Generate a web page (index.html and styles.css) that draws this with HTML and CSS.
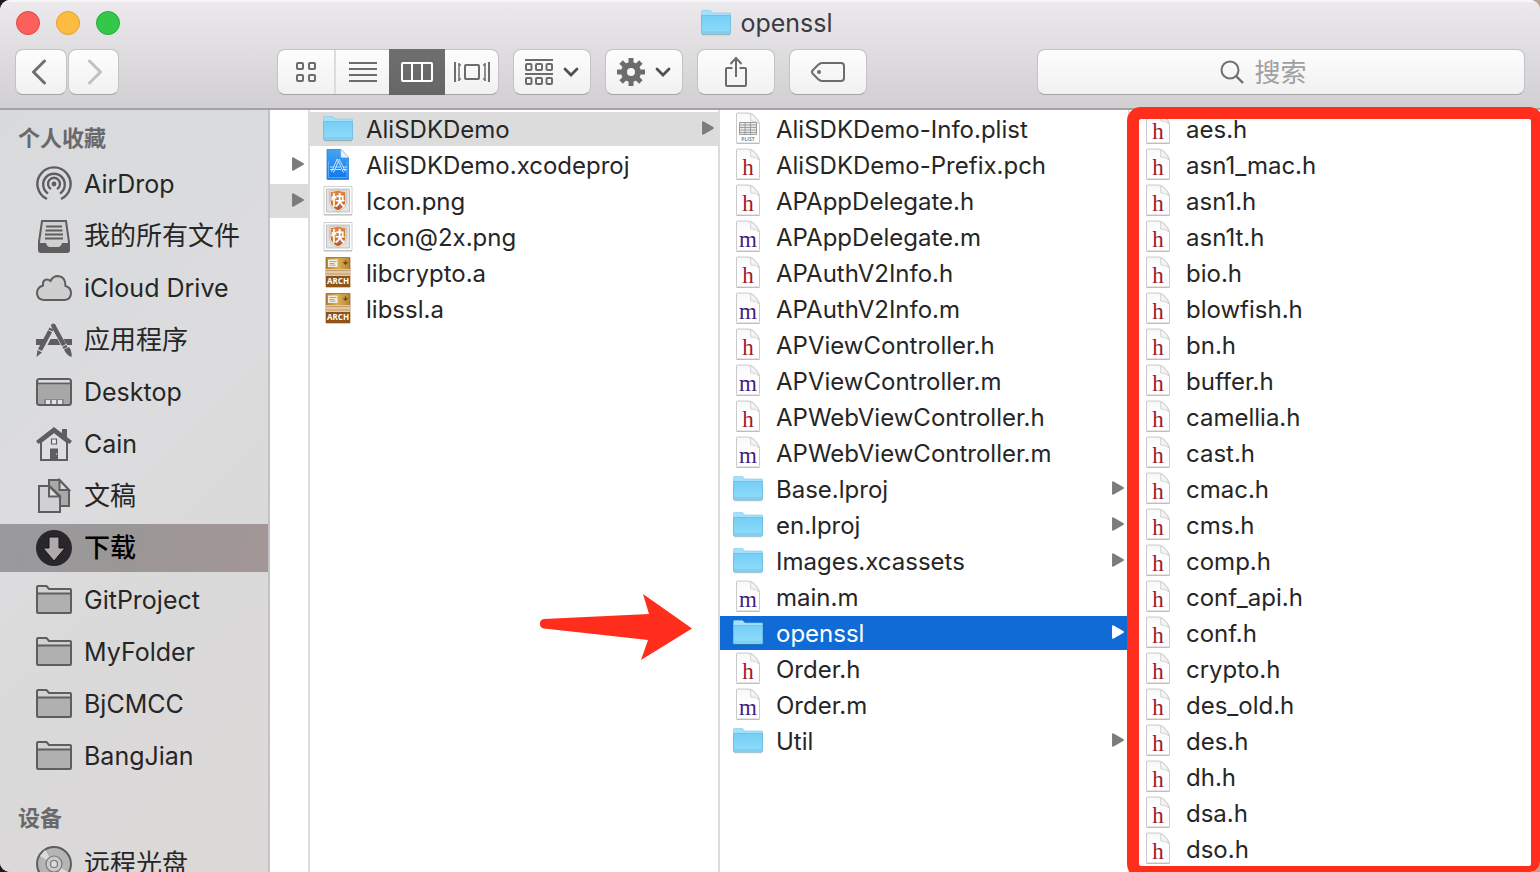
FILE: index.html
```html
<!DOCTYPE html>
<html lang="zh-CN">
<head>
<meta charset="utf-8">
<meta name="viewport" content="width=device-width, initial-scale=1">
<title>openssl</title>
<link rel="stylesheet" href="styles.css">
</head>
<body>
<svg class="defs" width="0" height="0" aria-hidden="true">
  <defs>
    <linearGradient id="folder-fill" x1="0" y1="0" x2="0" y2="1"><stop offset="0" stop-color="#76cff5"/><stop offset="1" stop-color="#8fdcfa"/></linearGradient>
    <linearGradient id="xcode-fill" x1="0" y1="0" x2="0" y2="1"><stop offset="0" stop-color="#45a5f2"/><stop offset="1" stop-color="#0f77ea"/></linearGradient>
    <linearGradient id="page-fill" x1="0" y1="0" x2="0" y2="1"><stop offset="0" stop-color="#f7f7f7"/><stop offset=".4" stop-color="#ffffff"/></linearGradient>
    <linearGradient id="shield-fill" x1="0" y1="0" x2="0" y2="1"><stop offset="0" stop-color="#e08a4c"/><stop offset="1" stop-color="#b9581f"/></linearGradient>
    <linearGradient id="box-fill" x1="0" y1="0" x2="1" y2="0"><stop offset="0" stop-color="#b68334"/><stop offset=".5" stop-color="#d9ae57"/><stop offset="1" stop-color="#b68334"/></linearGradient>
  </defs>
  <symbol id="folder" viewBox="0 0 30 34">
    <path d="M1 28.5h28" stroke="#000" stroke-opacity=".2" stroke-width="1.5"/>
    <path d="M.5 27V5.5q0-1 1-1h8l2.500 2.500H29q.5 0 .5.8V27z" fill="#a3e0fb" stroke="#82c8e6" stroke-width=".6"/>
    <path d="M.5 9.500h29v17.500q0 1-1 1h-27q-1 0-1-1z" fill="url(#folder-fill)" stroke="#66b9dc" stroke-width=".7"/>
    <path d="M1 26h28" stroke="#5fb7df" stroke-width=".6"/>
  </symbol>
  <symbol id="page" viewBox="0 0 30 34">
    <path d="M3.500 31.400h23" stroke="#aaa" stroke-width="1"/>
    <path d="M3.500 2q0-1 1-1H16q4 .5 7 4.500 3.500 4 3.500 7V30q0 1-1 1h-21q-1 0-1-1z" fill="url(#page-fill)" stroke="#cacaca"/>
    <path d="M17 1.500q1 4 .7 7.500 5-.5 8.500 3Q25 8 22 5q-3-3-5-3.500z" fill="#f4f4f4" stroke="#cfcfcf" stroke-width=".9"/>
  </symbol>
  <symbol id="table" viewBox="0 0 30 34">
    <path d="M6 10h18v12.500H6z" fill="#e9e9e9"/>
    <path d="M6.500 10.500h17v12h-17zM6 13h18M6 15.500h18M6 18h18M6 20.500h18M12 10v13M17.500 10v13" fill="none" stroke="#969696" stroke-width=".9"/>
  </symbol>
  <symbol id="file-xcode" viewBox="0 0 30 34">
    <path d="M4 31.400h22" stroke="#888" stroke-width="1"/>
    <path d="M4 1.500h14l7.500 8V31H4z" fill="url(#xcode-fill)" stroke="#2b83d8" stroke-width=".8"/>
    <path d="M18 1.500v7q0 1 1 1h6.500z" fill="#e9f2fb" stroke="#b9cfe4" stroke-width=".6"/>
    <path d="M5.500 13v16.500h18.500V13" fill="none" stroke="#8cc6fa" stroke-width=".6"/>
    <path d="M8.500 24l5.700-13M10.500 24.500l5-11.500M16 11l6.500 12.500M14.200 11l6.300 13.500M7 21.500h4M12 21.500h6M20 21.500h4M7 19h4M13 19h4M20 19h4" fill="none" stroke="#d9eeff" stroke-width=".9"/>
  </symbol>
  <symbol id="file-png" viewBox="0 0 30 34">
    <path d="M1 30.500h28" stroke="#777" stroke-width="1.500"/>
    <path d="M1 2.500h28v28H1z" fill="#fff" stroke="#c4c4c4" stroke-width=".8"/>
    <path d="M3.500 5h23v23h-23z" fill="#e3e3e3" stroke="#b5b5b5" stroke-width=".8"/>
    <path d="M15 5.500q3.500 2 8 2V17q0 6.500-8 10-8-3.500-8-10V7.500q4.500 0 8-2z" fill="url(#shield-fill)" stroke="#f7f7f7" stroke-width="1.200"/>
    <path d="M14.900 5q3.500 2 8.700 2V17q0 7-8.600 10.700Q6.400 24 6.400 17V7q5 0 8.500-2z" fill="none" stroke="#a39a94" stroke-width=".5"/>
  </symbol>
  <symbol id="file-arch" viewBox="0 0 30 34">
    <path d="M3 1.500h24v29.500H3z" fill="url(#box-fill)" stroke="#8b5c22" stroke-width=".7"/>
    <path d="M3 13h24v7H3z" fill="#e1c9a5"/>
    <path d="M3 14.500h24M3 18h24" stroke="#b69060" stroke-width=".8"/>
    <path d="M3 20h24v11H3z" fill="#8f5318"/>
    <path d="M5 3.500h9.500V11H5z" fill="#f5efe2"/>
    <path d="M6.500 5.500h7M6.500 7.500h5M6.500 9.200h6" stroke="#9b9184" stroke-width=".8"/>
    <path d="M22.500 4v4.500m-2-2h4l-2 2.200z" stroke="#6d4618" stroke-width=".8" fill="#6d4618"/>
  </symbol>
  <symbol id="arrow" viewBox="0 0 12 14"><path d="M.8 1v12L11.200 7z" fill="currentColor" stroke="currentColor" stroke-width="1.500" stroke-linejoin="round"/></symbol>
  <symbol id="side-folder" viewBox="0 0 36 36">
    <path d="M1 30V5q0-1 1-1h8.500l2.500 3H34q1 0 1 1v22q0 1-1 1H2q-1 0-1-1z" fill="#d2d2d3"/>
    <path d="M1 11h34v20H1z" fill="#b0b0b1"/>
    <path d="M1 30V5q0-1 1-1h8.500l2.500 3H34q1 0 1 1v22q0 1-1 1H2q-1 0-1-1zM1 11.500h34" fill="none" stroke="#5e5e60" stroke-width="2"/>
  </symbol>
</svg>

<div class="window">
  <header class="titlebar">
    <div class="title-row">
      <div class="lights">
        <button class="light light-close" aria-label="关闭"></button>
        <button class="light light-min" aria-label="最小化"></button>
        <button class="light light-zoom" aria-label="缩放"></button>
      </div>
      <h1 class="title"><svg class="icon"><use href="#folder"/></svg>openssl</h1>
    </div>
    <div class="toolbar">
      <div class="nav">
        <button class="tool nav-btn" aria-label="后退"><svg width="16" height="26" viewBox="0 0 16 26"><path d="M13.500 2L2.500 13l11 11" fill="none" stroke="#6f6f6f" stroke-width="3" stroke-linecap="round" stroke-linejoin="round"/></svg></button>
        <button class="tool nav-btn" aria-label="前进"><svg width="16" height="26" viewBox="0 0 16 26"><path d="M2.500 2l11 11-11 11" fill="none" stroke="#c0c0c0" stroke-width="3" stroke-linecap="round" stroke-linejoin="round"/></svg></button>
      </div>
      <div class="views">
        <button class="view" aria-label="图标"><svg width="20" height="20" viewBox="0 0 20 20" fill="none" stroke="#6c6c6c" stroke-width="2"><rect x="1" y="1" width="6" height="6" rx="1"/><rect x="13" y="1" width="6" height="6" rx="1"/><rect x="1" y="13" width="6" height="6" rx="1"/><rect x="13" y="13" width="6" height="6" rx="1"/></svg></button>
        <button class="view" aria-label="列表"><svg width="28" height="20" viewBox="0 0 28 20" stroke="#6c6c6c" stroke-width="2"><path d="M0 1h28M0 7h28M0 13h28M0 19h28"/></svg></button>
        <button class="view view-on" aria-label="分栏" aria-pressed="true"><svg width="32" height="20" viewBox="0 0 32 20" fill="none" stroke="#fff" stroke-width="2"><rect x="1" y="1" width="30" height="18" rx="1"/><path d="M11 1v18M21 1v18"/></svg></button>
        <button class="view" aria-label="Cover Flow"><svg width="36" height="20" viewBox="0 0 36 20" fill="none" stroke="#6c6c6c" stroke-width="2"><path d="M1 0v20M35 0v20"/><path d="M5 1v18M4 1.500l3 2M4 18.500l3-2M31 1v18M32 1.500l-3 2M32 18.500l-3-2" stroke-width="1.500"/><rect x="11" y="3" width="14" height="14" rx="1"/></svg></button>
      </div>
      <button class="tool" aria-label="排列"><svg width="28" height="28" viewBox="0 0 28 28" fill="none" stroke="#6c6c6c" stroke-width="2"><path d="M0 2h28M0 16h28"/><rect x="1" y="6" width="5.500" height="6" rx="1"/><rect x="11" y="6" width="6" height="6" rx="1"/><rect x="21.500" y="6" width="5.500" height="6" rx="1"/><rect x="1" y="20" width="5.500" height="6" rx="1"/><rect x="11" y="20" width="6" height="6" rx="1"/><rect x="21.500" y="20" width="5.500" height="6" rx="1"/></svg><svg width="16" height="10" viewBox="0 0 16 10"><path d="M2 2l6 6 6-6" fill="none" stroke="#505050" stroke-width="2.800" stroke-linecap="round"/></svg></button>
      <button class="tool" aria-label="操作"><svg width="28" height="28" viewBox="0 0 28 28"><circle cx="14" cy="14" r="7" fill="none" stroke="#6c6c6c" stroke-width="6"/><g stroke="#6c6c6c" stroke-width="5"><path d="M14 0v6M14 22v6M0 14h6M22 14h6M4.100 4.100l4.200 4.200M19.700 19.700l4.200 4.200M23.900 4.100l-4.200 4.200M8.300 19.700l-4.200 4.200"/></g></svg><svg width="16" height="10" viewBox="0 0 16 10"><path d="M2 2l6 6 6-6" fill="none" stroke="#505050" stroke-width="2.800" stroke-linecap="round"/></svg></button>
      <button class="tool" aria-label="共享"><svg width="24" height="32" viewBox="0 0 24 32" fill="none" stroke="#6c6c6c" stroke-width="2"><path d="M8.500 12H3q-1 0-1 1v16q0 1 1 1h18q1 0 1-1V13q0-1-1-1h-5.500M12 21V2M6.500 8L12 2l5.500 6"/></svg></button>
      <button class="tool" aria-label="标记"><svg width="36" height="22" viewBox="0 0 36 22" fill="none" stroke="#6c6c6c" stroke-width="2"><path d="M12 2h19q3 0 3 3v12q0 3-3 3H12q-2 0-4-2l-5-5q-2-2 0-4l5-5q2-2 4-2z"/><circle cx="9" cy="11" r="2" fill="#6c6c6c" stroke="none"/></svg></button>
      <label class="search">
        <svg width="24" height="24" viewBox="0 0 24 24" fill="none" stroke="#6f6f6f" stroke-width="2"><circle cx="10" cy="10" r="8.500"/><path d="M16 16l7 7" stroke-width="2.400"/></svg>
        <input class="search-input" type="search" placeholder="搜索" aria-label="搜索">
      </label>
    </div>
  </header>

  <main class="body">
    <nav class="sidebar">
      <h2 class="side-head">个人收藏</h2>
      <a class="side-item" href="#airdrop"><svg class="side-icon" viewBox="0 0 36 36" fill="none" stroke="#5e5e60" stroke-width="2.400"><circle cx="18" cy="18" r="2.400" fill="#5e5e60" stroke="none"/><path d="M15 23a6 6 0 1 1 6 0M12 27.500a10.800 10.800 0 1 1 12 0"/><path d="M11 33a16.600 16.600 0 1 1 14 0"/></svg>AirDrop</a>
      <a class="side-item cjk" href="#all"><svg class="side-icon" viewBox="0 0 36 36"><path d="M6 3h24l3 21v8q0 2-2 2H5q-2 0-2-2v-8z" fill="#d0d0d1" stroke="#5e5e60" stroke-width="2"/><path d="M3 25h7q1 4 4 4h8q3 0 4-4h7v7q0 2-2 2H5q-2 0-2-2z" fill="#5e5e60"/><path d="M10 8.500h16M9.500 12.500h17M9 16.500h18M9 20.500h18" stroke="#5e5e60" stroke-width="2"/></svg>我的所有文件</a>
      <a class="side-item" href="#icloud"><svg class="side-icon" viewBox="0 0 36 36"><path d="M8 30q-7-.5-7-7 0-5.500 6-7.500-.5-5.500 3.500-6 2-.2 4 1.500Q17 6 22 6q7.500.5 7.500 10 5.500 1.500 5.500 7 0 6.500-6.500 7z" fill="#cfcfd0" stroke="#5e5e60" stroke-width="2"/></svg>iCloud Drive</a>
      <a class="side-item cjk" href="#apps"><svg class="side-icon" viewBox="0 0 36 36"><path d="M0 17h9l-2.500 6H0zM14.500 17h7l3 6H11.500zM27.500 17H36v6h-5.500z" fill="#5e5e60"/><path d="M15.500 6.500L4 28M17 3l12.500 23" fill="none" stroke="#5e5e60" stroke-width="4.500"/><path d="M14.500 3.500q3-4 5.500.5zM1.500 28l4.500 2.500L.5 35zM28 27.500l5-2.500q3.500 4 2.500 10-5-1.500-7.500-7.500z" fill="#5e5e60"/><path d="M12.500 8l5 2.500M25.500 25l5.500-3" stroke="#dcdcde" stroke-width="1"/></svg>应用程序</a>
      <a class="side-item" href="#desktop"><svg class="side-icon" viewBox="0 0 36 36"><rect x="1" y="5" width="34" height="26" rx="2.500" fill="#a7a7a8" stroke="#5e5e60" stroke-width="2"/><path d="M2.500 6h31v2.500h-31z" fill="#ddd"/><path d="M1 9.500h34" stroke="#5e5e60" stroke-width="1.500"/><path d="M8 25h20v5H8z" fill="#888"/><path d="M10 26h4v4h-4zM16 26h4v4h-4zM22 26h4v4h-4z" fill="#e4e4e5"/></svg>Desktop</a>
      <a class="side-item" href="#cain"><svg class="side-icon" viewBox="0 0 36 36"><path d="M5 16L18 6l13 10v18H5z" fill="#dedee0" stroke="#5e5e60" stroke-width="2"/><path d="M26 3h5v10l-5-4zM0 15L18 1l18 14-2.500 3L18 6 2.500 18z" fill="#5e5e60"/><path d="M14 22.500h8V34h-8z" fill="#5e5e60"/><path d="M15.500 13h5v5h-5z" fill="#eee" stroke="#5e5e60" stroke-width="1.200"/><circle cx="20.500" cy="28" r=".7" fill="#ddd"/></svg>Cain</a>
      <a class="side-item cjk" href="#docs"><svg class="side-icon" viewBox="0 0 36 36" stroke="#5e5e60" stroke-width="2"><path d="M13 2h10.500L33 12v16H13z" fill="#a9a9aa"/><path d="M23.500 2v10H33z" fill="#d8d8da"/><path d="M3 8h10.500L24 18v16H3z" fill="#d1d1d3"/><path d="M13 8v10.500h10.500z" fill="#dedee0"/></svg>文稿</a>
      <a class="side-item side-on cjk" href="#downloads" aria-current="page"><svg class="side-icon" viewBox="0 0 36 36"><circle cx="18" cy="18" r="18" fill="#29272b"/><path d="M13 7h10v11h6L18 31 7 18h6z" fill="#b1a9aa" stroke="#171619"/></svg>下载</a>
      <a class="side-item" href="#git"><svg class="side-icon"><use href="#side-folder"/></svg>GitProject</a>
      <a class="side-item" href="#my"><svg class="side-icon"><use href="#side-folder"/></svg>MyFolder</a>
      <a class="side-item" href="#bj"><svg class="side-icon"><use href="#side-folder"/></svg>BjCMCC</a>
      <a class="side-item" href="#bang"><svg class="side-icon"><use href="#side-folder"/></svg>BangJian</a>
      <h2 class="side-head side-head-next">设备</h2>
      <a class="side-item cjk" href="#disc"><svg class="side-icon" viewBox="0 0 36 36"><circle cx="18" cy="18" r="17" fill="#b5b5b6" stroke="#5e5e60" stroke-width="2"/><path d="M18 18L4 10l5-6zM18 18l14 8-5 6z" fill="#dcdcdd"/><circle cx="18" cy="18" r="8" fill="#c9c9ca" stroke="#77777a" stroke-width="1.200"/><circle cx="18" cy="18" r="3.500" fill="#ddd" stroke="#77777a" stroke-width="1.200"/></svg>远程光盘</a>
    </nav>

    <div class="column column-parent">
      <div class="row row-empty"></div>
      <button class="row" aria-label="展开"><svg class="arrow"><use href="#arrow"/></svg></button>
      <button class="row row-path" aria-label="展开"><svg class="arrow"><use href="#arrow"/></svg></button>
    </div>

    <div class="column column-mid">
      <button class="row row-path"><svg class="icon"><use href="#folder"/></svg>AliSDKDemo<svg class="arrow"><use href="#arrow"/></svg></button>
      <button class="row"><svg class="icon"><use href="#file-xcode"/></svg>AliSDKDemo.xcodeproj</button>
      <button class="row"><svg class="icon"><use href="#file-png"/><text x="15" y="21" class="shield-label">快</text></svg>Icon.png</button>
      <button class="row"><svg class="icon"><use href="#file-png"/><text x="15" y="21" class="shield-label">快</text></svg>Icon@2x.png</button>
      <button class="row"><svg class="icon"><use href="#file-arch"/><text x="15" y="28" class="arch-label">ARCH</text></svg>libcrypto.a</button>
      <button class="row"><svg class="icon"><use href="#file-arch"/><text x="15" y="28" class="arch-label">ARCH</text></svg>libssl.a</button>
      <svg class="pointer" width="156" height="68" viewBox="0 0 156 68" aria-hidden="true"><path d="M6 26L111 21 105 1 154 35.500 103 67 110 47 6 35.500A4.800 4.800 0 0 1 6 26z" fill="#ff2d1c"/></svg>
    </div>

    <div class="column column-mid">
      <button class="row"><svg class="icon"><use href="#page"/><use href="#table"/><text x="15" y="29" class="plist-label">PLIST</text></svg>AliSDKDemo-Info.plist</button>
      <button class="row"><svg class="icon"><use href="#page"/><text x="15" y="27" class="glyph glyph-h">h</text></svg>AliSDKDemo-Prefix.pch</button>
      <button class="row"><svg class="icon"><use href="#page"/><text x="15" y="27" class="glyph glyph-h">h</text></svg>APAppDelegate.h</button>
      <button class="row"><svg class="icon"><use href="#page"/><text x="15" y="27" class="glyph glyph-m">m</text></svg>APAppDelegate.m</button>
      <button class="row"><svg class="icon"><use href="#page"/><text x="15" y="27" class="glyph glyph-h">h</text></svg>APAuthV2Info.h</button>
      <button class="row"><svg class="icon"><use href="#page"/><text x="15" y="27" class="glyph glyph-m">m</text></svg>APAuthV2Info.m</button>
      <button class="row"><svg class="icon"><use href="#page"/><text x="15" y="27" class="glyph glyph-h">h</text></svg>APViewController.h</button>
      <button class="row"><svg class="icon"><use href="#page"/><text x="15" y="27" class="glyph glyph-m">m</text></svg>APViewController.m</button>
      <button class="row"><svg class="icon"><use href="#page"/><text x="15" y="27" class="glyph glyph-h">h</text></svg>APWebViewController.h</button>
      <button class="row"><svg class="icon"><use href="#page"/><text x="15" y="27" class="glyph glyph-m">m</text></svg>APWebViewController.m</button>
      <button class="row"><svg class="icon"><use href="#folder"/></svg>Base.lproj<svg class="arrow"><use href="#arrow"/></svg></button>
      <button class="row"><svg class="icon"><use href="#folder"/></svg>en.lproj<svg class="arrow"><use href="#arrow"/></svg></button>
      <button class="row"><svg class="icon"><use href="#folder"/></svg>Images.xcassets<svg class="arrow"><use href="#arrow"/></svg></button>
      <button class="row"><svg class="icon"><use href="#page"/><text x="15" y="27" class="glyph glyph-m">m</text></svg>main.m</button>
      <button class="row row-on"><svg class="icon"><use href="#folder"/></svg>openssl<svg class="arrow"><use href="#arrow"/></svg></button>
      <button class="row"><svg class="icon"><use href="#page"/><text x="15" y="27" class="glyph glyph-h">h</text></svg>Order.h</button>
      <button class="row"><svg class="icon"><use href="#page"/><text x="15" y="27" class="glyph glyph-m">m</text></svg>Order.m</button>
      <button class="row"><svg class="icon"><use href="#folder"/></svg>Util<svg class="arrow"><use href="#arrow"/></svg></button>
    </div>

    <div class="column column-last">
      <button class="row"><svg class="icon"><use href="#page"/><text x="15" y="27" class="glyph glyph-h">h</text></svg>aes.h</button>
      <button class="row"><svg class="icon"><use href="#page"/><text x="15" y="27" class="glyph glyph-h">h</text></svg>asn1_mac.h</button>
      <button class="row"><svg class="icon"><use href="#page"/><text x="15" y="27" class="glyph glyph-h">h</text></svg>asn1.h</button>
      <button class="row"><svg class="icon"><use href="#page"/><text x="15" y="27" class="glyph glyph-h">h</text></svg>asn1t.h</button>
      <button class="row"><svg class="icon"><use href="#page"/><text x="15" y="27" class="glyph glyph-h">h</text></svg>bio.h</button>
      <button class="row"><svg class="icon"><use href="#page"/><text x="15" y="27" class="glyph glyph-h">h</text></svg>blowfish.h</button>
      <button class="row"><svg class="icon"><use href="#page"/><text x="15" y="27" class="glyph glyph-h">h</text></svg>bn.h</button>
      <button class="row"><svg class="icon"><use href="#page"/><text x="15" y="27" class="glyph glyph-h">h</text></svg>buffer.h</button>
      <button class="row"><svg class="icon"><use href="#page"/><text x="15" y="27" class="glyph glyph-h">h</text></svg>camellia.h</button>
      <button class="row"><svg class="icon"><use href="#page"/><text x="15" y="27" class="glyph glyph-h">h</text></svg>cast.h</button>
      <button class="row"><svg class="icon"><use href="#page"/><text x="15" y="27" class="glyph glyph-h">h</text></svg>cmac.h</button>
      <button class="row"><svg class="icon"><use href="#page"/><text x="15" y="27" class="glyph glyph-h">h</text></svg>cms.h</button>
      <button class="row"><svg class="icon"><use href="#page"/><text x="15" y="27" class="glyph glyph-h">h</text></svg>comp.h</button>
      <button class="row"><svg class="icon"><use href="#page"/><text x="15" y="27" class="glyph glyph-h">h</text></svg>conf_api.h</button>
      <button class="row"><svg class="icon"><use href="#page"/><text x="15" y="27" class="glyph glyph-h">h</text></svg>conf.h</button>
      <button class="row"><svg class="icon"><use href="#page"/><text x="15" y="27" class="glyph glyph-h">h</text></svg>crypto.h</button>
      <button class="row"><svg class="icon"><use href="#page"/><text x="15" y="27" class="glyph glyph-h">h</text></svg>des_old.h</button>
      <button class="row"><svg class="icon"><use href="#page"/><text x="15" y="27" class="glyph glyph-h">h</text></svg>des.h</button>
      <button class="row"><svg class="icon"><use href="#page"/><text x="15" y="27" class="glyph glyph-h">h</text></svg>dh.h</button>
      <button class="row"><svg class="icon"><use href="#page"/><text x="15" y="27" class="glyph glyph-h">h</text></svg>dsa.h</button>
      <button class="row"><svg class="icon"><use href="#page"/><text x="15" y="27" class="glyph glyph-h">h</text></svg>dso.h</button>
      <div class="frame" aria-hidden="true"></div>
    </div>
  </main>
</div>
</body>
</html>
```

FILE: styles.css
```css
* {
  box-sizing: border-box;
}

body {
  margin: 0;
  background: linear-gradient(90deg, #1d1b20 50%, #b9a394 50%);
  font-family: Inter, "Noto Sans CJK SC", sans-serif;
  font-size: 24px;
  color: #262626;
}

button {
  margin: 0;
  padding: 0;
  border: 0;
  background: none;
  font: inherit;
  color: inherit;
}

svg {
  display: block;
  flex: none;
}

.defs {
  position: absolute;
}

.window {
  display: flex;
  flex-direction: column;
  height: 100vh;
  overflow: hidden;
  border-radius: 10px;
  background: #fff;
}

/* Title bar and toolbar */

.titlebar {
  flex: none;
  border-top: 2px solid #f6f5f7;
  border-bottom: 2px solid #a3a2a4;
  background: linear-gradient(#ebe9ec, #d1cfd2);
}

.title-row {
  display: grid;
  grid-template-columns: 1fr auto 1fr;
  align-items: center;
  height: 42px;
  padding: 0 22px 0 16px;
}

.lights {
  display: flex;
  gap: 16px;
}

.light {
  width: 24px;
  height: 24px;
  border: 1px solid;
  border-radius: 50%;
}

.light-close {
  background: #fc605c;
  border-color: #e2463f;
}

.light-min {
  background: #fdbc40;
  border-color: #dfa035;
}

.light-zoom {
  background: #34c84a;
  border-color: #27a937;
}

.title {
  display: flex;
  align-items: center;
  gap: 9px;
  margin: 0;
  font-size: 25px;
  font-weight: 400;
  line-height: 34px;
  color: #3c3a3d;
}

.toolbar {
  display: flex;
  gap: 14px;
  padding: 5px 15px 13px;
}

.tool,
.views,
.search {
  height: 46px;
  border: 1px solid #c3c2c4;
  border-bottom-color: #a6a5a7;
  border-radius: 8px;
  background: linear-gradient(#fdfdfd, #f1f1f1);
}

.tool {
  display: flex;
  flex: none;
  align-items: center;
  justify-content: center;
  gap: 10px;
  width: 78px;
}

.nav {
  display: flex;
  gap: 1px;
  margin-right: 144px;
}

.nav-btn {
  width: 52px;
  padding-right: 4px;
}

.nav-btn + .nav-btn {
  width: 51px;
  padding: 0 0 0 2px;
}

.views {
  display: grid;
  flex: none;
  grid-template-columns: 58px 53px 56px 53px;
}

.view {
  display: flex;
  align-items: center;
  justify-content: center;
}

.view:first-child {
  border-right: 2px solid #dcdcdc;
}

.view-on {
  margin: -1px 0;
  background: linear-gradient(#6f6f6f, #666);
}

.search {
  display: flex;
  flex: 0 1 488px;
  align-items: center;
  justify-content: center;
  gap: 11px;
  margin-left: auto;
}

.search-input {
  width: 88px;
  padding: 0;
  border: 0;
  outline: 0;
  background: none;
  font: inherit;
  font-size: 26px;
}

.search-input::placeholder {
  color: #a0a0a0;
  opacity: 1;
}

/* Sidebar */

.body {
  display: flex;
  flex: 1;
  min-height: 0;
}

.sidebar {
  flex: none;
  width: 270px;
  overflow: hidden;
  border-right: 2px solid #c3c3c5;
  background: linear-gradient(135deg, #d8dadb, #dcdcde 45%, #dad9d9 65%, #dcd8d8);
}

.side-head {
  margin: 0;
  padding: 6px 18px 0;
  font-size: 22px;
  font-weight: 700;
  line-height: 44px;
  color: #69696b;
}

.side-head-next {
  padding-top: 12px;
}

.side-item {
  display: flex;
  align-items: center;
  gap: 12px;
  height: 48px;
  margin-bottom: 4px;
  padding-left: 36px;
  font-size: 25px;
  line-height: 32px;
  color: #262626;
  text-decoration: none;
  white-space: nowrap;
}

.side-item.cjk {
  font-size: 26px;
}

.side-item.side-on {
  background: linear-gradient(100deg, #999a9f, #9b9796 45%, #a39696);
  color: #000;
  font-weight: 500;
}

.side-icon {
  width: 36px;
  height: 36px;
}

/* File columns */

.column {
  display: flex;
  position: relative;
  flex: none;
  flex-direction: column;
  gap: 2px;
  padding-top: 2px;
  border-right: 2px solid #dcdcdc;
}

.column-parent {
  width: 40px;
}

.column-mid {
  width: 410px;
}

.column-last {
  flex: 1;
  min-width: 0;
  border-right: 0;
}

.row {
  display: flex;
  flex: none;
  align-items: center;
  gap: 13px;
  height: 34px;
  padding: 0 4px 0 13px;
  text-align: left;
  white-space: nowrap;
}

.row-path {
  background: #dcdcdc;
}

.row-on {
  background: #116bd7;
  color: #fff;
}

.icon {
  width: 30px;
  height: 34px;
}

.arrow {
  width: 12px;
  height: 14px;
  margin: 0 0 2px auto;
  color: #7c7c7c;
}

.row-on .arrow {
  color: #fff;
}

.glyph {
  font-family: "Liberation Serif", serif;
  font-size: 23px;
  text-anchor: middle;
}

.glyph-h {
  fill: #a3162e;
}

.glyph-m {
  fill: #46207f;
}

.plist-label,
.arch-label {
  font-family: "Open Sans", sans-serif;
  font-weight: 700;
  text-anchor: middle;
}

.plist-label {
  font-size: 5px;
  fill: #8a8a8a;
}

.arch-label {
  font-size: 8px;
  fill: #fff;
}

.shield-label {
  font-family: "Noto Sans CJK SC", sans-serif;
  font-size: 14px;
  font-weight: 700;
  text-anchor: middle;
  fill: #fff;
}

/* Annotations drawn over the columns */

.pointer {
  position: absolute;
  top: 483px;
  right: 24px;
}

.frame {
  position: absolute;
  inset: -3px -3px -6px -3px;
  border: 12px solid #ff2d1c;
  border-radius: 14px;
  pointer-events: none;
}
```
